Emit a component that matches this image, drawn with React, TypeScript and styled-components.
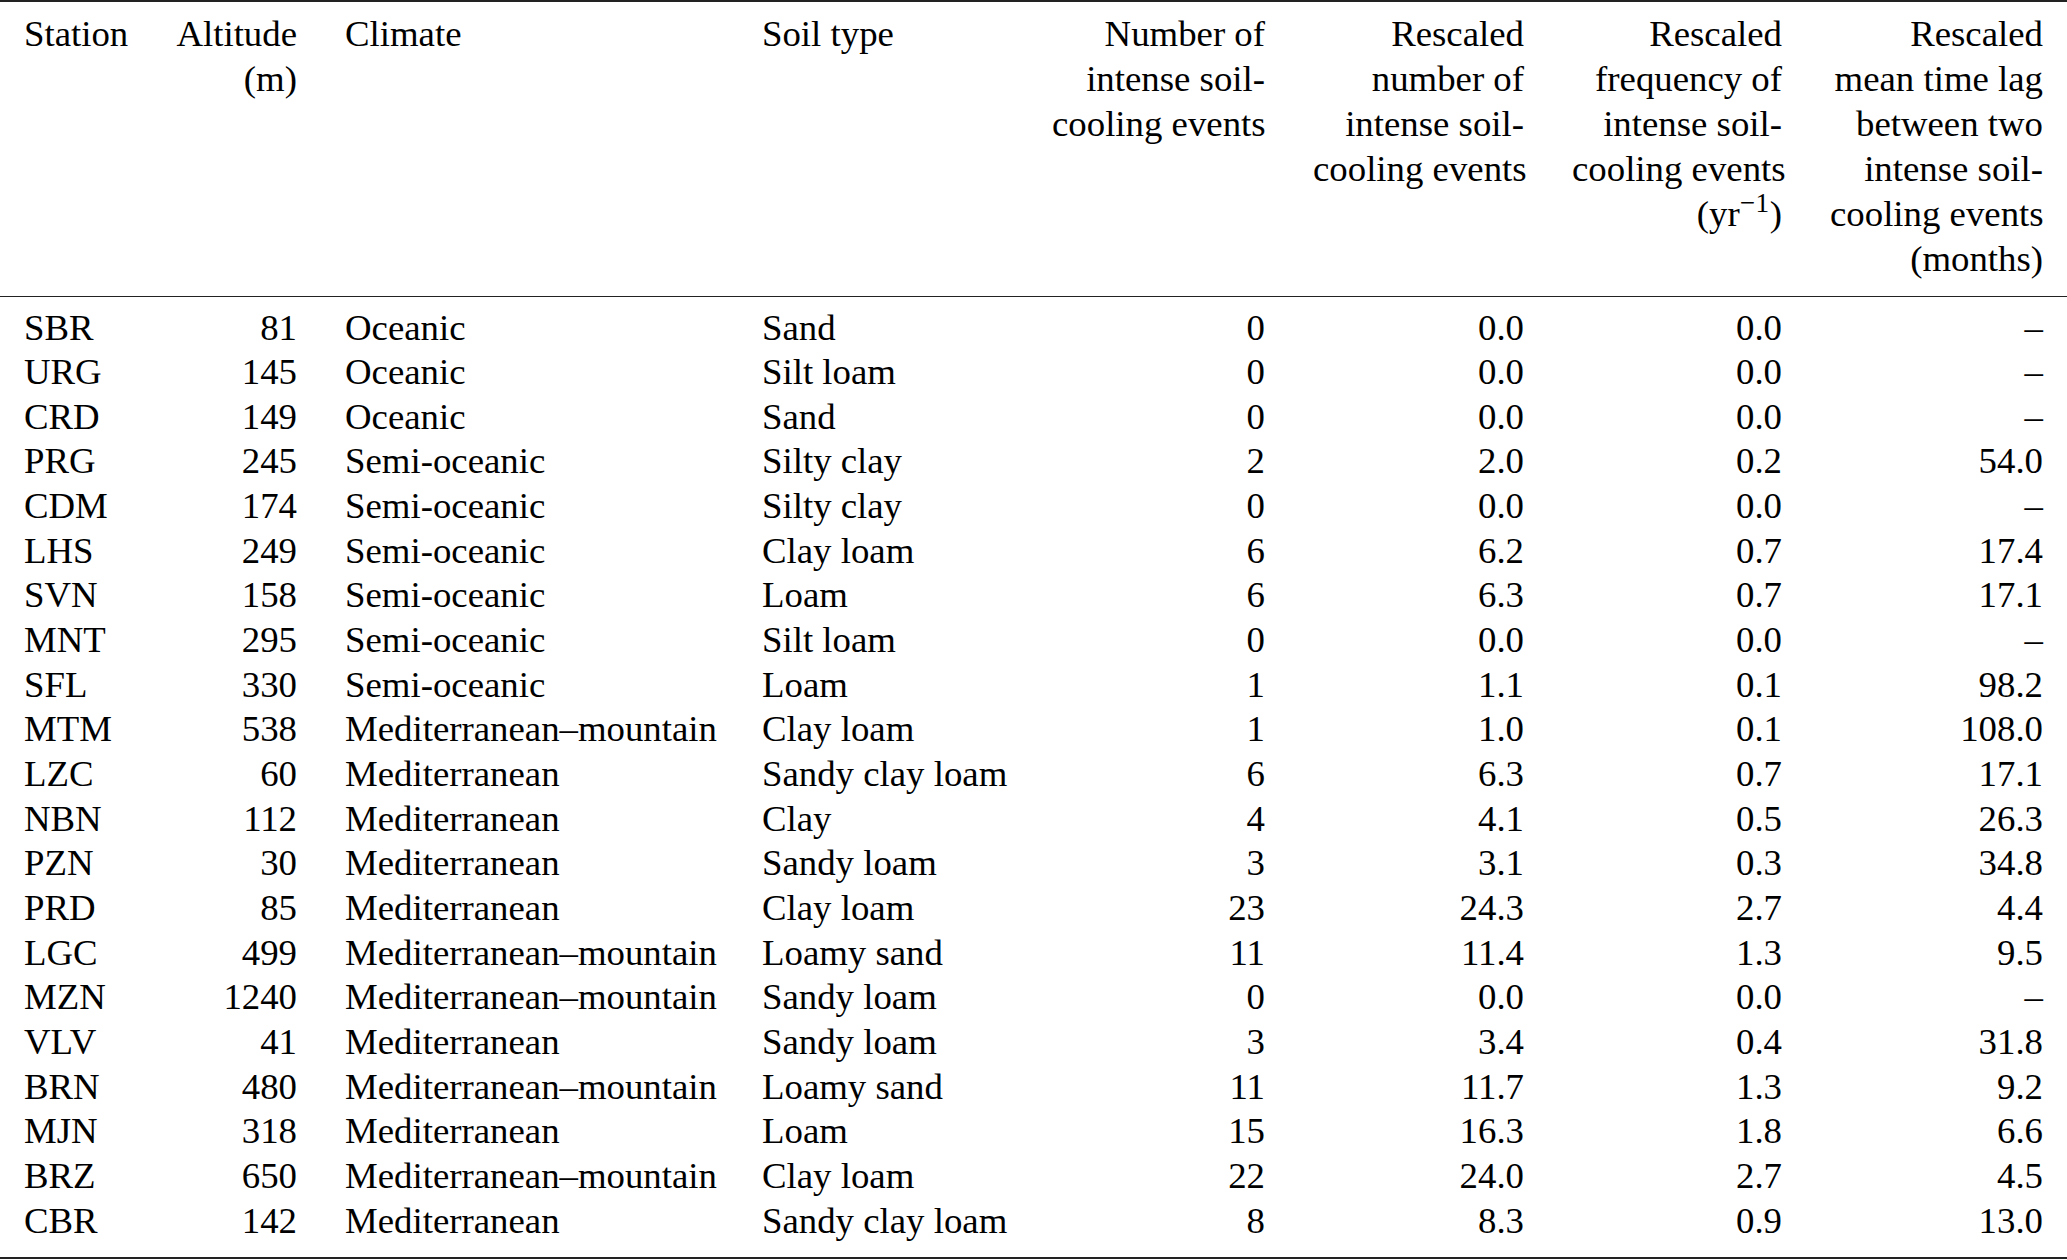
import React from 'react';
import styled, { createGlobalStyle } from 'styled-components';

const GlobalStyle = createGlobalStyle`
  html, body {
    margin: 0;
    padding: 0;
    background: #ffffff;
  }
  body {
    font-family: "Liberation Serif", "Times New Roman", serif;
    color: #000;
  }
`;

const Table = styled.table`
  width: 2067px;
  table-layout: fixed;
  border-collapse: collapse;
  border-top: 2px solid #222;
  border-bottom: 2px solid #222;
  font-size: 36.8px;
`;

const HeadCell = styled.th<{ $align: 'left' | 'right' }>`
  text-align: ${({ $align }) => $align};
  vertical-align: top;
  font-weight: normal;
  line-height: 45px;
  padding: 9px 24px 15px;
  white-space: nowrap;
  border-bottom: 1.5px solid #222;
`;

const Cell = styled.td<{ $align: 'left' | 'right' }>`
  text-align: ${({ $align }) => $align};
  line-height: 44.65px;
  padding: 0 24px;
  white-space: nowrap;

  tr:first-child > & {
    padding-top: 8.5px;
  }
  tr:last-child > & {
    padding-bottom: 14px;
  }
`;

const Sup = styled.sup`
  font-size: 0.74em;
  line-height: 0;
  vertical-align: 0.5em;
  letter-spacing: 0.02em;
`;

type Align = 'left' | 'right';

const columns: { width: number; align: Align }[] = [
  { width: 151, align: 'left' },
  { width: 170, align: 'right' },
  { width: 417, align: 'left' },
  { width: 290, align: 'left' },
  { width: 261, align: 'right' },
  { width: 259, align: 'right' },
  { width: 258, align: 'right' },
  { width: 261, align: 'right' },
];

const headers: React.ReactNode[] = [
  'Station',
  <>Altitude<br />(m)</>,
  'Climate',
  'Soil type',
  <>Number of<br />intense soil-<br />cooling events</>,
  <>Rescaled<br />number of<br />intense soil-<br />cooling events</>,
  <>Rescaled<br />frequency of<br />intense soil-<br />cooling events<br />(yr<Sup>−1</Sup>)</>,
  <>Rescaled<br />mean time lag<br />between two<br />intense soil-<br />cooling events<br />(months)</>,
];

const rows: string[][] = [
  ['SBR', '81', 'Oceanic', 'Sand', '0', '0.0', '0.0', '–'],
  ['URG', '145', 'Oceanic', 'Silt loam', '0', '0.0', '0.0', '–'],
  ['CRD', '149', 'Oceanic', 'Sand', '0', '0.0', '0.0', '–'],
  ['PRG', '245', 'Semi-oceanic', 'Silty clay', '2', '2.0', '0.2', '54.0'],
  ['CDM', '174', 'Semi-oceanic', 'Silty clay', '0', '0.0', '0.0', '–'],
  ['LHS', '249', 'Semi-oceanic', 'Clay loam', '6', '6.2', '0.7', '17.4'],
  ['SVN', '158', 'Semi-oceanic', 'Loam', '6', '6.3', '0.7', '17.1'],
  ['MNT', '295', 'Semi-oceanic', 'Silt loam', '0', '0.0', '0.0', '–'],
  ['SFL', '330', 'Semi-oceanic', 'Loam', '1', '1.1', '0.1', '98.2'],
  ['MTM', '538', 'Mediterranean–mountain', 'Clay loam', '1', '1.0', '0.1', '108.0'],
  ['LZC', '60', 'Mediterranean', 'Sandy clay loam', '6', '6.3', '0.7', '17.1'],
  ['NBN', '112', 'Mediterranean', 'Clay', '4', '4.1', '0.5', '26.3'],
  ['PZN', '30', 'Mediterranean', 'Sandy loam', '3', '3.1', '0.3', '34.8'],
  ['PRD', '85', 'Mediterranean', 'Clay loam', '23', '24.3', '2.7', '4.4'],
  ['LGC', '499', 'Mediterranean–mountain', 'Loamy sand', '11', '11.4', '1.3', '9.5'],
  ['MZN', '1240', 'Mediterranean–mountain', 'Sandy loam', '0', '0.0', '0.0', '–'],
  ['VLV', '41', 'Mediterranean', 'Sandy loam', '3', '3.4', '0.4', '31.8'],
  ['BRN', '480', 'Mediterranean–mountain', 'Loamy sand', '11', '11.7', '1.3', '9.2'],
  ['MJN', '318', 'Mediterranean', 'Loam', '15', '16.3', '1.8', '6.6'],
  ['BRZ', '650', 'Mediterranean–mountain', 'Clay loam', '22', '24.0', '2.7', '4.5'],
  ['CBR', '142', 'Mediterranean', 'Sandy clay loam', '8', '8.3', '0.9', '13.0'],
];

export default function App() {
  return (
    <>
      <GlobalStyle />
      <Table>
        <colgroup>
          {columns.map((c, i) => (
            <col key={i} style={{ width: c.width }} />
          ))}
        </colgroup>
        <thead>
          <tr>
            {headers.map((h, i) => (
              <HeadCell key={i} $align={columns[i].align}>
                {h}
              </HeadCell>
            ))}
          </tr>
        </thead>
        <tbody>
          {rows.map((r) => (
            <tr key={r[0]}>
              {r.map((v, i) => (
                <Cell key={i} $align={columns[i].align}>
                  {v}
                </Cell>
              ))}
            </tr>
          ))}
        </tbody>
      </Table>
    </>
  );
}
